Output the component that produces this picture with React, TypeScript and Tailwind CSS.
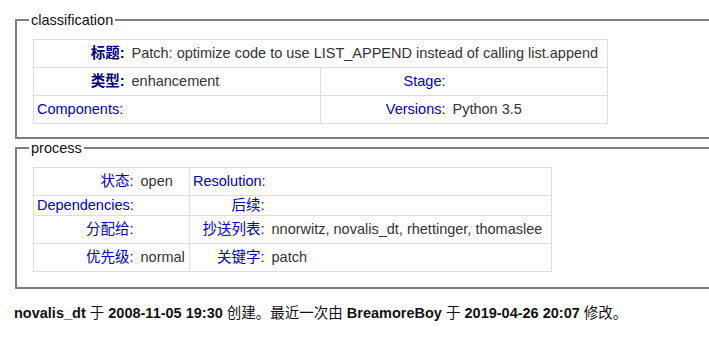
import React from "react";

const FONT = { fontFamily: '"Liberation Sans", Arial, "Noto Sans CJK SC", sans-serif' };

function Label({ children, bold = false, align = "right" }: { children: React.ReactNode; bold?: boolean; align?: "right" | "left" }) {
  return (
    <th
      className={`border-y border-l border-[#dddddd] px-[3px] ${align === "right" ? "text-right" : "text-left"} ${bold ? "font-bold text-[#000080]" : "font-normal text-[#0000c0]"} whitespace-nowrap align-middle`}
    >
      {children}
    </th>
  );
}

function Value({ children, colSpan }: { children?: React.ReactNode; colSpan?: number }) {
  return (
    <td colSpan={colSpan} className="border-y border-r border-[#dddddd] pl-[4px] pr-[3px] text-left text-[#333333] whitespace-nowrap align-middle">
      {children}
    </td>
  );
}

export default function App() {
  return (
    <div className="bg-white w-[709px] h-[340px] overflow-hidden text-[14.5px] leading-[17px]" style={FONT}>
      <div className="pt-[11px] pl-[15px] w-[760px]">
        <fieldset className="border-2 border-solid border-[#7f7f7f] m-0 pl-[12px] pr-0 pt-[10px] pb-[13px]">
          <legend className="px-[2px] text-[14.5px] leading-[18px] text-[#111111]">classification</legend>
          <table className="ml-[4px] border-collapse table-fixed w-[574px]">
            <colgroup>
              <col className="w-[94px]" />
              <col className="w-[193px]" />
              <col className="w-[128px]" />
              <col className="w-[159px]" />
            </colgroup>
            <tbody>
              <tr className="h-[28px]">
                <Label bold>标题:</Label>
                <Value colSpan={3}>Patch: optimize code to use LIST_APPEND instead of calling list.append</Value>
              </tr>
              <tr className="h-[28px]">
                <Label bold>类型:</Label>
                <Value>enhancement</Value>
                <Label>Stage:</Label>
                <Value></Value>
              </tr>
              <tr className="h-[28px]">
                <Label align="left">Components:</Label>
                <Value></Value>
                <Label>Versions:</Label>
                <Value>Python 3.5</Value>
              </tr>
            </tbody>
          </table>
        </fieldset>

        <fieldset className="border-2 border-solid border-[#7f7f7f] m-0 pl-[12px] pr-0 pt-[10px] pb-[15px]">
          <legend className="px-[2px] text-[14.5px] leading-[18px] text-[#111111]">process</legend>
          <table className="ml-[4px] border-collapse table-fixed w-[518px]">
            <colgroup>
              <col className="w-[103px]" />
              <col className="w-[53px]" />
              <col className="w-[78px]" />
              <col className="w-[284px]" />
            </colgroup>
            <tbody>
              <tr className="h-[28px]">
                <Label>状态:</Label>
                <Value>open</Value>
                <Label align="left">Resolution:</Label>
                <Value></Value>
              </tr>
              <tr className="h-[20px]">
                <Label align="left">Dependencies:</Label>
                <Value></Value>
                <Label>后续:</Label>
                <Value></Value>
              </tr>
              <tr className="h-[28px]">
                <Label>分配给:</Label>
                <Value></Value>
                <Label>抄送列表:</Label>
                <Value>nnorwitz, novalis_dt, rhettinger, thomaslee</Value>
              </tr>
              <tr className="h-[28px]">
                <Label>优先级:</Label>
                <Value>normal</Value>
                <Label>关键字:</Label>
                <Value>patch</Value>
              </tr>
            </tbody>
          </table>
        </fieldset>
      </div>

      <p className="mt-[16px] pl-[14px] text-[14.5px] leading-[17px] text-[#111111] whitespace-nowrap">
        <b>novalis_dt</b> 于 <b>2008-11-05 19:30</b> 创建。最近一次由 <b>BreamoreBoy</b> 于 <b>2019-04-26 20:07</b> 修改。
      </p>
    </div>
  );
}
